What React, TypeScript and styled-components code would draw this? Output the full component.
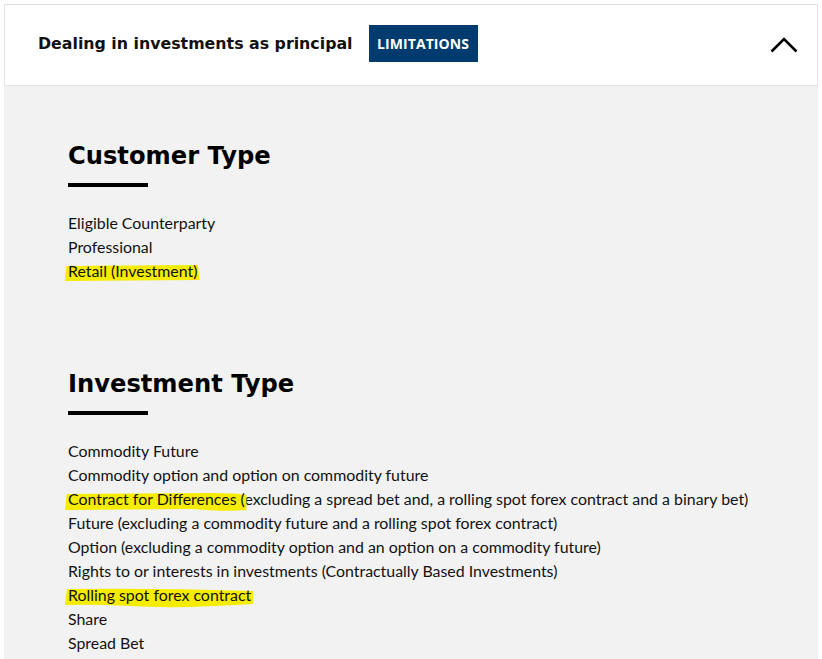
import React from "react";
import styled, { createGlobalStyle } from "styled-components";

const Global = createGlobalStyle`
  html, body { margin: 0; padding: 0; background: #ffffff; }
  body { font-family: "Lato", "Liberation Sans", sans-serif; }
`;

const Panel = styled.div`
  margin: 4px;
  width: 814px;
  box-sizing: border-box;
`;

const Header = styled.div`
  display: flex;
  align-items: center;
  height: 82px;
  box-sizing: border-box;
  border: 1px solid #e3e3e3;
  background: #ffffff;
  padding: 0 19px 4px 33px;
`;

const Title = styled.h2`
  margin: 0;
  font-family: "DejaVu Sans", Verdana, sans-serif;
  font-weight: 700;
  font-size: 15.8px;
  color: #111;
`;

const Badge = styled.span`
  margin-left: 16px;
  display: inline-flex;
  align-items: center;
  justify-content: center;
  width: 109px;
  box-sizing: border-box;
  height: 37px;
  background: #003b6f;
  color: #fff;
  font-family: "Open Sans", "Liberation Sans", sans-serif;
  font-weight: 700;
  font-size: 14px;
  letter-spacing: 0.1px;
`;

const Spacer = styled.div`
  flex: 1;
`;

const Chevron = styled.svg`
  display: block;
  margin-top: 4px;
`;

const Body = styled.div`
  background: #f2f2f2;
  padding: 56px 0 20px 64px;
  min-height: 600px;
  box-sizing: border-box;
`;

const Section = styled.section<{ $gap?: number }>`
  margin-top: ${(p) => p.$gap ?? 0}px;
`;

const Heading = styled.h3`
  margin: 0;
  font-family: "DejaVu Sans", Verdana, sans-serif;
  font-weight: 700;
  font-size: 24.2px;
  line-height: 28px;
  color: #000;
`;

const Bar = styled.div`
  width: 80px;
  height: 4px;
  background: #000;
  margin-top: 13px;
`;

const List = styled.ul`
  list-style: none;
  margin: 24px 0 0;
  padding: 0;
`;

const Item = styled.li`
  font-family: "Lato", "Liberation Sans", sans-serif;
  font-size: 15.9px;
  line-height: 24px;
  color: #111;
`;

const Mark = styled.span`
  position: relative;
  z-index: 0;
`;

const Stroke = styled.svg`
  position: absolute;
  left: -3px;
  top: 0;
  width: calc(100% + 5px);
  height: 24px;
  z-index: -1;
  overflow: visible;
`;

type Shape = "flat" | "wave" | "swoop";

const paths: Record<Shape, string> = {
  flat: "M1 5 L99 4 L100 19 L0 20 Z",
  wave: "M1 5 L80 4 Q95 4 100 6 L100 21 Q88 23 70 20 L0 21 Z",
  swoop: "M1 4 Q50 3 100 6 L100 19 Q60 24 35 21 Q15 19 0 20 Z",
};

const Highlight: React.FC<{ shape: Shape; children: React.ReactNode }> = ({ shape, children }) => (
  <Mark>
    <Stroke viewBox="0 0 100 24" preserveAspectRatio="none">
      <path d={paths[shape]} fill="#f5ec00" />
    </Stroke>
    {children}
  </Mark>
);

const customers: React.ReactNode[] = [
  "Eligible Counterparty",
  "Professional",
  <Highlight key="r" shape="flat">Retail (Investment)</Highlight>,
];

const investments: React.ReactNode[] = [
  "Commodity Future",
  "Commodity option and option on commodity future",
  <>
    <Highlight shape="wave">Contract for Differences (</Highlight>
    {"excluding a spread bet and, a rolling spot forex contract and a binary bet)"}
  </>,
  "Future (excluding a commodity future and a rolling spot forex contract)",
  "Option (excluding a commodity option and an option on a commodity future)",
  "Rights to or interests in investments (Contractually Based Investments)",
  <Highlight key="f" shape="swoop">Rolling spot forex contract</Highlight>,
  "Share",
  "Spread Bet",
];

export default function App() {
  return (
    <>
      <Global />
      <Panel>
        <Header>
          <Title>Dealing in investments as principal</Title>
          <Badge>LIMITATIONS</Badge>
          <Spacer />
          <Chevron width="28" height="16" viewBox="0 0 28 16">
            <path d="M1.5 14.5 L14 2 L26.5 14.5" fill="none" stroke="#000" strokeWidth="2.6" />
          </Chevron>
        </Header>
        <Body>
          <Section>
            <Heading>Customer Type</Heading>
            <Bar />
            <List>
              {customers.map((c, i) => (
                <Item key={i}>{c}</Item>
              ))}
            </List>
          </Section>
          <Section $gap={87}>
            <Heading>Investment Type</Heading>
            <Bar />
            <List>
              {investments.map((c, i) => (
                <Item key={i}>{c}</Item>
              ))}
            </List>
          </Section>
        </Body>
      </Panel>
    </>
  );
}
